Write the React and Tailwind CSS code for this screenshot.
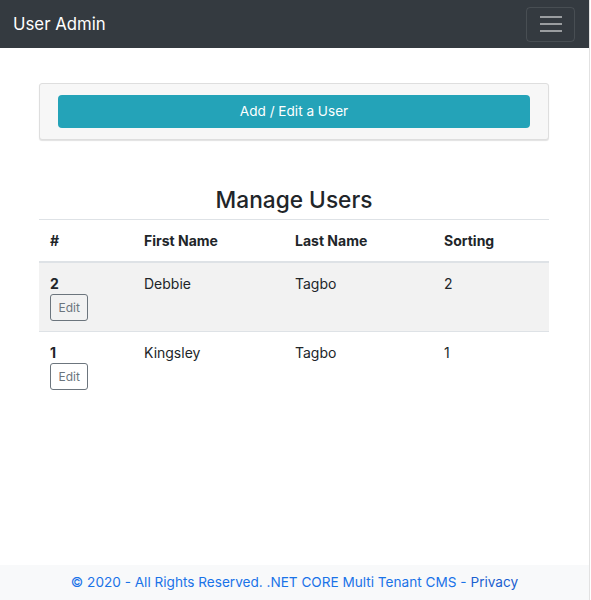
import React from 'react';

const users = [
  { id: 2, first: 'Debbie', last: 'Tagbo', sorting: 2 },
  { id: 1, first: 'Kingsley', last: 'Tagbo', sorting: 1 },
];

const App = () => {
  return (
    <div className="w-full h-[600px] bg-white font-['Inter',sans-serif] text-[#212529]">
      <div className="w-[590px] h-full border-r border-[#e2e2e2] flex flex-col">
        <nav className="h-12 bg-[#343a40] flex items-center justify-between pl-[13px] pr-[14px]">
          <span className="text-white text-[16.8px] leading-none">User Admin</span>
          <button className="w-[49px] h-[35px] border border-white/10 rounded flex flex-col items-center justify-center gap-[5px]">
            <span className="block w-[22px] h-[2px] bg-white/50" />
            <span className="block w-[22px] h-[2px] bg-white/50" />
            <span className="block w-[22px] h-[2px] bg-white/50" />
          </button>
        </nav>

        <main className="flex-1 px-[39px] pr-[40px] pt-[35px]">
          <div className="bg-[#f7f7f7] border border-[#dedede] rounded-[3px] shadow-[0_1px_1px_rgba(0,0,0,0.12)] px-[18px] py-[11px]">
            <button className="w-full h-[33px] bg-[#24a3b8] text-white text-[13.6px] rounded-[4px]">
              Add / Edit a User
            </button>
          </div>

          <h2 className="text-center text-[22.7px] leading-[29px] font-medium mt-[45px] mb-[5px]">Manage Users</h2>

          <table className="w-full text-[14px] border-t border-[#dee2e6] border-collapse">
            <thead>
              <tr className="border-b-2 border-[#dee2e6]">
                <th className="w-[93px] text-left font-bold px-[11px] py-[10px] leading-[21px]">#</th>
                <th className="w-[151px] text-left font-bold px-[12px] py-[10px] leading-[21px]">First Name</th>
                <th className="w-[149px] text-left font-bold px-[12px] py-[10px] leading-[21px]">Last Name</th>
                <th className="text-left font-bold px-[12px] py-[10px] leading-[21px]">Sorting</th>
              </tr>
            </thead>
            <tbody>
              {users.map((u, i) => (
                <tr key={u.id} className={i === 0 ? 'bg-[#f2f2f2] border-b border-[#dee2e6]' : ''}>
                  <td className="align-top px-[11px] pt-[10px] pb-[10px] leading-[21px]">
                    <div className="font-bold">{u.id}</div>
                    <button className="h-[27px] px-[7.5px] border border-[#6c757d] rounded-[3px] text-[12px] text-[#6c757d] leading-none">
                      Edit
                    </button>
                  </td>
                  <td className="align-top px-[12px] pt-[10px] leading-[21px]">{u.first}</td>
                  <td className="align-top px-[12px] pt-[10px] leading-[21px]">{u.last}</td>
                  <td className="align-top px-[12px] pt-[10px] leading-[21px]">{u.sorting}</td>
                </tr>
              ))}
            </tbody>
          </table>
        </main>

        <footer className="h-[35px] bg-[#f8f9fa] flex items-center justify-center text-[13.6px] text-[#1a73e8]">
          © 2020 - All Rights Reserved. .NET CORE Multi Tenant CMS - <a className="ml-1 text-[#1a5fd0]">Privacy</a>
        </footer>
      </div>
    </div>
  );
};

export default App;
